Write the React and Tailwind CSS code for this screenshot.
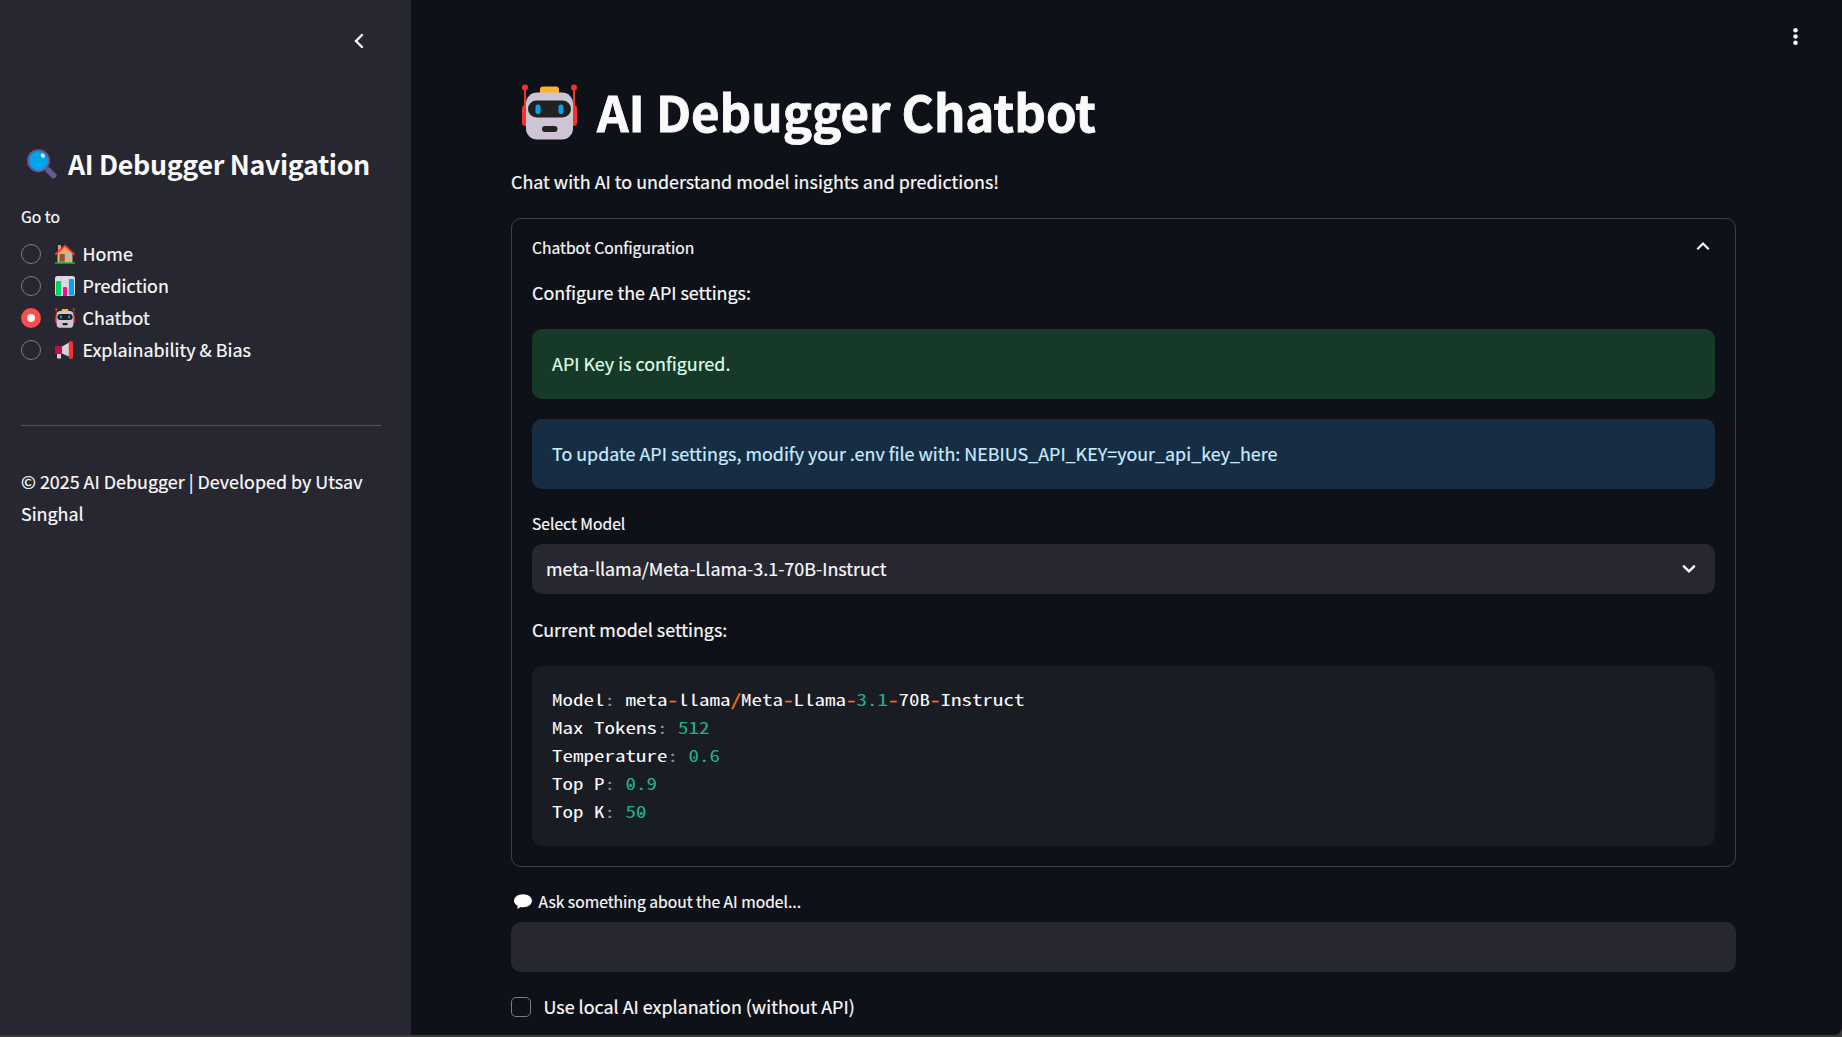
function Robot({ className }) {
  return (
    <svg viewBox="0 0 55 56" className={className} aria-hidden="true">
      <rect x="0" y="21" width="8" height="21" rx="3.5" fill="#f8312f" />
      <rect x="47" y="21" width="8" height="21" rx="3.5" fill="#f8312f" />
      <path d="M3 4v20M52 4v20" stroke="#f8312f" strokeWidth="2" />
      <circle cx="3" cy="3.5" r="3" fill="#f8312f" />
      <circle cx="52" cy="3.5" r="3" fill="#f8312f" />
      <rect x="18" y="2.5" width="19" height="10" rx="3" fill="#ffb02e" />
      <rect x="4" y="8.5" width="47" height="47" rx="11" fill="#cdc4d6" />
      <rect x="6" y="16.5" width="43" height="17" rx="8.5" fill="#212121" />
      <rect x="13.5" y="20.5" width="5" height="9.5" rx="2.5" fill="#00a6ed" />
      <rect x="36.5" y="20.5" width="5" height="9.5" rx="2.5" fill="#00a6ed" />
      <rect x="20" y="42" width="15.5" height="6" rx="3" fill="#212121" />
    </svg>
  );
}

function Magnifier() {
  return (
    <svg viewBox="0 0 30 30" className="h-[30px] w-[30px]" aria-hidden="true">
      <path d="M19 19l3 3" stroke="#533566" strokeWidth="4" />
      <path d="M21.5 21.5l5 5" stroke="#635994" strokeWidth="6" strokeLinecap="round" />
      <circle cx="11.5" cy="11.7" r="10.5" fill="#00a6ed" stroke="#635994" strokeWidth="2" />
      <ellipse cx="15.8" cy="6.6" rx="1.7" ry="2.3" fill="#fff" transform="rotate(-35 15.8 6.6)" />
    </svg>
  );
}

function House() {
  return (
    <svg viewBox="0 0 20 20" className="h-5 w-5" aria-hidden="true">
      <path d="M3 1h3v7H3z" fill="#d9a06a" />
      <path d="M2.5 9L10 2l7.5 7v9.5h-15z" fill="#f3ad61" />
      <path d="M.9 10.2L10 1.6l9.1 8.6" fill="none" stroke="#f92f3c" strokeWidth="1.8" strokeLinecap="round" />
      <path d="M4.5 10h5.3v7.7H4.5z" fill="#8c5543" />
      <path d="M11.5 10h4.5v4h-4.5z" fill="#83cbff" />
      <path d="M0 19h20" stroke="#00e068" strokeWidth="1.2" />
    </svg>
  );
}

function BarChart() {
  return (
    <svg viewBox="0 0 20 20" className="h-5 w-5" aria-hidden="true">
      <rect width="20" height="20" rx="2.5" fill="#e1d8ec" />
      <path d="M6.5 0v20M13.5 0v20M0 6.5h20M0 13h20" stroke="#cdc4d6" strokeWidth=".8" />
      <path d="M1 6q0-1 1-1h3q1 0 1 1v13.5H2q-1 0-1-1z" fill="#00d26a" />
      <path d="M8 12q0-1 1-1h2q1 0 1 1v8H8z" fill="#f70a8d" />
      <path d="M14 4q0-1 1-1h3q1 0 1 1v14.5q0 1-1 1h-4z" fill="#00a6ed" />
    </svg>
  );
}

function Megaphone() {
  return (
    <svg viewBox="0 0 20 20" className="h-5 w-5" aria-hidden="true">
      <path d="M2 12h4v6.5H2z" fill="#d3d3d3" />
      <path d="M7 6.5L15 2v15l-8-3.5z" fill="#d3d3d3" />
      <path d="M0 6.5q0-.8.8-.8H7V14H.8q-.8 0-.8-.8z" fill="#ca0b4a" />
      <rect x="13.8" y="1" width="4.2" height="18" rx="2" fill="#f8312f" />
    </svg>
  );
}

function SpeechBalloon() {
  return (
    <svg viewBox="0 0 18 15" className="h-[15px] w-[18px]" aria-hidden="true">
      <path d="M9 .3c5 0 9 2.9 9 6.5s-4 6.5-9 6.5q-1.5 0-2.8-.3-1 1.6-3.2 1.6.9-1.4.5-2.9Q0 9.9 0 6.8C0 3.2 4 .3 9 .3z" fill="#fff" />
    </svg>
  );
}

const pages = [
  { label: "Home", icon: <House /> },
  { label: "Prediction", icon: <BarChart /> },
  { label: "Chatbot", icon: <Robot className="h-5 w-5" />, active: true },
  { label: "Explainability & Bias", icon: <Megaphone /> },
];

function Sidebar() {
  return (
    <aside className="flex h-[1035px] w-[411px] shrink-0 flex-col bg-[#262730] pl-[21px] pr-[30px]">
      <div className="flex h-[146px] justify-end pr-[17px] pt-[33px]">
        <svg viewBox="0 0 12 16" className="h-4 w-3" fill="none" stroke="#fafafa" strokeWidth="2.4" aria-hidden="true">
          <path d="M10 2L4 8l6 6" strokeLinecap="round" strokeLinejoin="miter" />
        </svg>
      </div>
      <h2 className="flex h-9 items-center whitespace-nowrap pl-[6px] text-[26.8px] font-bold leading-9 tracking-[-0.35px] [-webkit-text-stroke:0px]">
        <Magnifier />
        <span className="ml-[11px]">AI Debugger Navigation</span>
      </h2>
      <div className="mt-5 h-7 text-[15.65px] leading-[30px]">Go to</div>
      <div className="mt-[7px] flex flex-col">
        {pages.map((p) => (
          <div key={p.label} className="flex h-8 items-center">
            {p.active ? (
              <span className="mt-[2px] flex h-5 w-5 items-center justify-center rounded-full bg-[#ff4b4b]">
                <span className="h-2 w-2 rounded-full bg-[#fafafa]" />
              </span>
            ) : (
              <span className="mt-[2px] h-5 w-5 rounded-full border border-[#7c7d83]" />
            )}
            <span className="ml-[14px] mt-[1px]">{p.icon}</span>
            <span className="ml-[7.5px] whitespace-nowrap leading-8">{p.label}</span>
          </div>
        ))}
      </div>
      <hr className="mt-[60px] border-[#515259]" />
      <p className="mt-[39px] leading-8">© 2025 AI Debugger | Developed by Utsav Singhal</p>
    </aside>
  );
}

const Num = ({ children }) => <span className="text-[#21b091]">{children}</span>;
const Op = ({ children }) => <span className="text-[#ff6b1a] [-webkit-text-stroke:0.4px]">{children}</span>;
const Colon = () => <span className="text-[#8a919b]">:</span>;

/* Zero with a centre dot, as in programming typefaces. */
const Zero = () => (
  <span className="relative">
    0<span className="absolute left-1/2 top-1/2 -ml-[0.75px] mt-[0.5px] h-[2.5px] w-[1.5px] rounded-full bg-current" />
  </span>
);

function Settings() {
  return (
    <div className="mt-[21px] h-[180px] rounded-[10px] bg-[#1a1c24] px-5 pt-5">
      <pre className="w-fit origin-left scale-x-[1.3333] font-['Noto_Sans_Mono_CJK_SC','Liberation_Mono',monospace] text-[15.75px] leading-7 [-webkit-text-stroke:0px]">
        <div>Model<Colon /> meta<Op>-</Op>llama<Op>/</Op>Meta<Op>-</Op>Llama<Op>-</Op><Num>3.1</Num><Op>-</Op>7<Zero />B<Op>-</Op>Instruct</div>
        <div>Max Tokens<Colon /> <Num>512</Num></div>
        <div>Temperature<Colon /> <Num><Zero />.6</Num></div>
        <div>Top P<Colon /> <Num><Zero />.9</Num></div>
        <div>Top K<Colon /> <Num>5<Zero /></Num></div>
      </pre>
    </div>
  );
}

function Configuration() {
  return (
    <section className="mt-[21px] h-[649px] rounded-[10px] border border-[#3d4045] px-5 pt-[14px]">
      <div className="flex h-7 items-center justify-between pr-[5.5px] text-[15.65px]">
        <span className="h-7 leading-[30px]">Chatbot Configuration</span>
        <svg viewBox="0 0 14 10" className="mb-[2px] h-[10px] w-[14px]" fill="none" stroke="#fafafa" strokeWidth="2.2" aria-hidden="true">
          <path d="M1.3 8.2L7 2.5l5.7 5.7" />
        </svg>
      </div>
      <p className="mt-[15px] leading-8">Configure the API settings:</p>
      <div className="mt-[21px] h-[70px] rounded-[10px] bg-[#173928] px-5 pt-[18px] leading-8 text-[#dffde9]">API Key is configured.</div>
      <div className="mt-5 h-[70px] rounded-[10px] bg-[#172d43] px-5 pt-[18px] leading-8 text-[#c7ebff]">
        To update API settings, modify your .env file with: NEBIUS_API_KEY=your_api_key_here
      </div>
      <div className="mt-5 h-7 text-[15.65px] leading-[30px]">Select Model</div>
      <div className="mt-[7px] flex h-[50px] items-center justify-between rounded-[10px] bg-[#262730] pb-[2px] pl-[14px] pr-[19px]">
        <span className="leading-8">meta-llama/Meta-Llama-3.1-70B-Instruct</span>
        <svg viewBox="0 0 14 10" className="mt-[2px] h-[10px] w-[14px]" fill="none" stroke="#fafafa" strokeWidth="2.5" strokeLinecap="round" aria-hidden="true">
          <path d="M1.9 2.3L7 7.3l5.1-5" />
        </svg>
      </div>
      <p className="mt-[19px] leading-8">Current model settings:</p>
      <Settings />
    </section>
  );
}

export default function App() {
  return (
    <div className="h-[1037px] w-[1842px] overflow-hidden bg-[#3a3a3a] font-['Noto_Sans_CJK_SC','Noto_Sans',sans-serif] text-[17.9px] text-[#fafafa] [-webkit-text-stroke:0.2px]">
      <div className="flex h-[1035px] overflow-hidden rounded-br-[8px] bg-[#0e1117]">
        <Sidebar />
        <main className="flex-1 pl-[100px] pr-[106px]">
          <div className="-mr-[66px] flex h-[78px] justify-end pt-[27px]">
            <svg viewBox="0 0 14 20" className="h-5 w-[14px]" fill="#fafafa" aria-hidden="true">
              <circle cx="7.5" cy="3.3" r="2.25" />
              <circle cx="7.5" cy="9.5" r="2.25" />
              <circle cx="7.5" cy="15.8" r="2.25" />
            </svg>
          </div>
          <h1 className="flex h-[66px] items-center whitespace-nowrap pl-[10.5px] text-[49.2px] font-bold leading-[66px] [-webkit-text-stroke:0.8px]">
            <Robot className="mt-[2px] h-14 w-[55px]" />
            <span className="ml-[20.5px]">AI Debugger Chatbot</span>
          </h1>
          <p className="mt-[21px] leading-8">Chat with AI to understand model insights and predictions!</p>
          <Configuration />
          <label className="mt-5 flex h-7 items-center pl-[3px] text-[15.65px]">
            <SpeechBalloon />
            <span className="ml-[6.5px] h-7 leading-[30px]">Ask something about the AI model...</span>
          </label>
          <div className="mt-[7px] h-[50px] rounded-[10px] bg-[#262730]" />
          <label className="mt-[18px] flex h-8 items-center">
            <span className="mt-[2px] h-5 w-5 rounded-[5px] border border-[#7a7c80]" />
            <span className="ml-[12.5px] leading-8">Use local AI explanation (without API)</span>
          </label>
        </main>
      </div>
    </div>
  );
}
